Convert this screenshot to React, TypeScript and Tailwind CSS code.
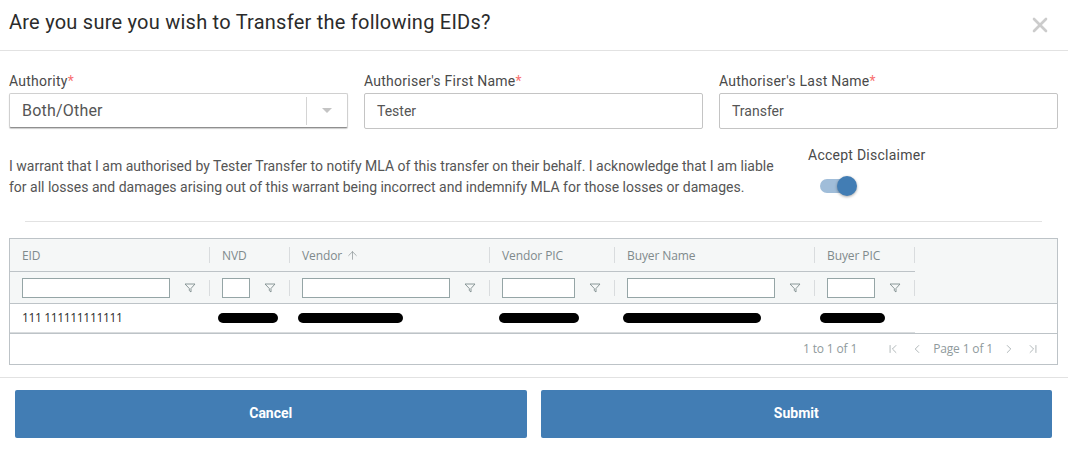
import { X, ArrowUp, ChevronLeft, ChevronRight, ChevronFirst, ChevronLast } from "lucide-react";

const COLUMNS = [
  { label: "EID", width: "w-[200px]", head: "w-[199px]", input: "w-[148px]", sort: false, pill: "" },
  { label: "NVD", width: "w-[80px]", head: "w-[80px]", input: "w-[28px]", sort: false, pill: "ml-[8px] w-[60px]" },
  { label: "Vendor", width: "w-[200px]", head: "w-[200px]", input: "w-[148px]", sort: true, pill: "ml-[8px] w-[105px]" },
  { label: "Vendor PIC", width: "w-[125px]", head: "w-[125px]", input: "w-[73px]", sort: false, pill: "ml-[9px] w-[80px]" },
  { label: "Buyer Name", width: "w-[200px]", head: "w-[200px]", input: "w-[148px]", sort: false, pill: "ml-[8px] w-[138px]" },
  { label: "Buyer PIC", width: "w-[100px]", head: "w-[100px]", input: "w-[48px]", sort: false, pill: "ml-[5px] w-[65px]" },
];

function FilterIcon() {
  return (
    <svg width="12" height="12" viewBox="0 0 12 12" fill="none" stroke="#7f8c8d" strokeWidth="0.9" className="shrink-0">
      <path d="M1 2h10L7 6.5V10L5.3 8.6V6.5z" />
    </svg>
  );
}

function Label({ text }: { text: string }) {
  return (
    <label className="block h-[22px] text-[14px] leading-[21px] tracking-[0.25px] text-[#4a4a4a]">
      {text}
      <span className="text-[#f87171]">*</span>
    </label>
  );
}

export default function App() {
  return (
    <div className="w-[1068px] h-[449px] bg-white overflow-hidden font-['Roboto',sans-serif]">
      {/* header */}
      <div className="h-[51px] border-b border-[#e2e2e2] pl-[9px] pr-[16px] flex items-center justify-between">
        <h1 className="pb-[6px] text-[20px] leading-[46px] tracking-[0.24px] text-[#2b2b2b]">
          Are you sure you wish to Transfer the following EIDs?
        </h1>
        <X size={24} strokeWidth={2.6} className="text-[#cccccc] mb-[1px]" />
      </div>

      {/* form */}
      <div className="pl-[9px] pr-[10px] pt-[20px]">
        <div className="grid grid-cols-3 gap-[16px]">
          <div>
            <Label text="Authority" />
            <div className="h-[35px] flex items-center rounded-[2px] border border-[#d0d0d0] border-b-[#8f8f8f] shadow-[0_1px_1px_rgba(0,0,0,0.2)]">
              <span className="flex-1 pl-[12px] text-[16px] tracking-[0.2px] text-[#555555]">Both/Other</span>
              <span className="w-px h-[28px] bg-[#d4d4d4]" />
              <span className="w-[40px] flex justify-center">
                <span className="w-0 h-0 border-x-[5px] border-x-transparent border-t-[5px] border-t-[#c4c4c4]" />
              </span>
            </div>
          </div>
          <div>
            <Label text="Authoriser's First Name" />
            <div className="h-[36px] flex items-center rounded-[2px] border border-[#c4c4c4] px-[12px] text-[14px] text-[#555555]">Tester</div>
          </div>
          <div>
            <Label text="Authoriser's Last Name" />
            <div className="h-[36px] flex items-center rounded-[2px] border border-[#c4c4c4] px-[12px] text-[14px] text-[#555555]">Transfer</div>
          </div>
        </div>

        {/* disclaimer */}
        <div className="flex mt-[16px]">
          <p className="w-[799px] pt-[11px] text-[14px] leading-[21px] text-[#555555]">
            I warrant that I am authorised by Tester Transfer to notify MLA of this transfer on their behalf. I acknowledge that I am liable
            <br />
            for all losses and damages arising out of this warrant being incorrect and indemnify MLA for those losses or damages.
          </p>
          <div>
            <div className="text-[14px] leading-[21px] tracking-[0.25px] text-[#4a4a4a]">Accept Disclaimer</div>
            <div className="relative mt-[10px] ml-[12px] h-[20px] w-[37px] flex items-center">
              <span className="h-[14px] w-[30px] rounded-full bg-[#a0bdd9]" />
              <span className="absolute right-0 top-0 h-[20px] w-[20px] rounded-full bg-[#427db4] shadow-[0_1px_3px_rgba(0,0,0,0.35)]" />
            </div>
          </div>
        </div>

        <div className="mx-[16px] mt-[23px] h-px bg-[#e2e2e2]" />

        {/* grid */}
        <div className="mt-[16px] h-[127px] border border-[#bdc3c7] font-['Open_Sans',sans-serif] text-[12px] text-[#808a8c]">
          <div className="bg-[#f5f7f7]">
            <div className="flex h-[33px]">
              <div className="flex border-b border-[#bdc3c7] tracking-[-0.1px]">
                {COLUMNS.map((c, i) => (
                  <div key={c.label} className={`${c.head} flex items-center`}>
                    {i > 0 && <span className="w-px h-[16px] bg-[#d9dcde]" />}
                    <span className="pl-[12px] pt-[1px] flex items-center gap-[4px]">
                      {c.label}
                      {c.sort && <ArrowUp size={13} strokeWidth={1.2} />}
                    </span>
                  </div>
                ))}
                <span className="w-px h-[16px] mt-[8px] bg-[#d9dcde]" />
              </div>
            </div>
            <div className="flex h-[32px] border-b border-[#bdc3c7]">
              {COLUMNS.map((c, i) => (
                <div key={c.label} className={`${c.head} flex items-center`}>
                  {i > 0 && <span className="w-px h-[16px] bg-[#d9dcde]" />}
                  <span className={`ml-[12px] ${c.input} h-[20px] bg-white border border-[#95a5a6]`} />
                  <span className="ml-[14px]"><FilterIcon /></span>
                </div>
              ))}
              <span className="w-px h-[16px] mt-[8px] bg-[#d9dcde]" />
            </div>
          </div>
          <div className="flex h-[29px] items-center">
            <div className="flex h-full border-b border-[#d9dcde] items-center">
              {COLUMNS.map((c, i) => (
                <div key={c.label} className={`${c.width} flex items-center`}>
                  {i === 0 ? (
                    <span className="pl-[12px] text-[#2b2b2b] text-[12px] tracking-[-0.35px]">111 111111111111</span>
                  ) : (
                    <span className={`${c.pill} h-[10px] rounded-full bg-black`} />
                  )}
                </div>
              ))}
            </div>
          </div>
          <div className="h-[32px] border-t border-[#bdc3c7] pb-[2px] flex items-center justify-end pr-[17px] text-[#8f9a9c] tracking-[-0.15px]">
            <span className="mr-[29px]">1 to 1 of 1</span>
            <ChevronFirst size={14} strokeWidth={1.2} className="mr-[10px]" />
            <ChevronLeft size={14} strokeWidth={1.2} className="mr-[9px]" />
            <span>Page 1 of 1</span>
            <ChevronRight size={14} strokeWidth={1.2} className="ml-[9px]" />
            <ChevronLast size={14} strokeWidth={1.2} className="ml-[10px]" />
          </div>
        </div>
      </div>

      {/* footer */}
      <div className="mt-[12px] border-t border-[#e2e2e2] pt-[12px] pl-[15px] pr-[16px] grid grid-cols-2 gap-[14px]">
        <button className="h-[48px] pb-[2px] rounded-[2px] bg-[#427db4] text-white text-[14px] font-bold">Cancel</button>
        <button className="h-[48px] pb-[2px] rounded-[2px] bg-[#427db4] text-white text-[14px] font-bold">Submit</button>
      </div>
    </div>
  );
}
